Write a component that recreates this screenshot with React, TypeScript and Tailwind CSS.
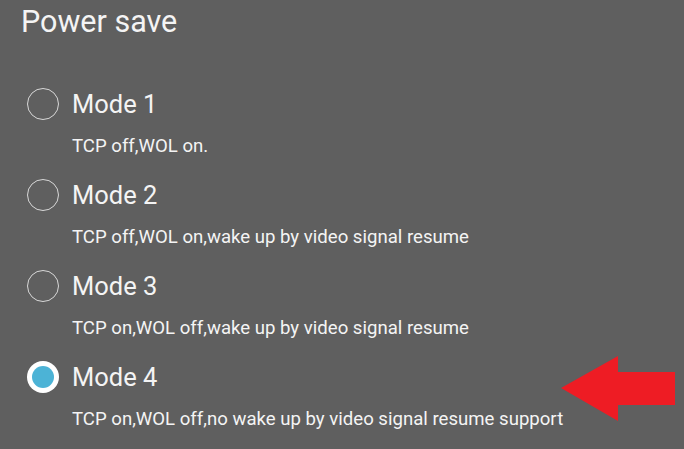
import React from "react";

const modes = [
  { label: "Mode 1", desc: "TCP off,WOL on.", checked: false },
  { label: "Mode 2", desc: "TCP off,WOL on,wake up by video signal resume", checked: false },
  { label: "Mode 3", desc: "TCP on,WOL off,wake up by video signal resume", checked: false },
  { label: "Mode 4", desc: "TCP on,WOL off,no wake up by video signal resume support", checked: true },
];

function Radio({ checked }: { checked: boolean }) {
  if (checked) {
    return (
      <div className="flex h-[32px] w-[32px] items-center justify-center rounded-full bg-white">
        <div className="h-[22px] w-[22px] rounded-full bg-[#4cb3d6]" />
      </div>
    );
  }
  return <div className="h-[32px] w-[32px] rounded-full border-[1.5px] border-[#d8d8d8]" />;
}

export default function App() {
  return (
    <div
      className="relative h-[449px] w-[684px] overflow-hidden bg-[#5f5f5f] text-white"
      style={{ fontFamily: "Roboto, 'Noto Sans', sans-serif" }}
    >
      <div className="pl-[21px] pt-[2px] text-[30.5px] leading-[40px] text-[#f4f4f4]">Power save</div>
      <div className="mt-[45px] flex flex-col">
        {modes.map((m) => (
          <div key={m.label} className="flex flex-col pl-[27px]">
            <div className="flex h-[34px] items-center gap-[13px]">
              <Radio checked={m.checked} />
              <span className="text-[25.5px] text-[#f4f4f4]">{m.label}</span>
            </div>
            <div className="mt-[13px] h-[44px] pl-[45px] text-[18.6px] leading-[24px] text-[#f4f4f4]">{m.desc}</div>
          </div>
        ))}
      </div>
      <svg className="absolute left-[560px] top-[354px]" width="118" height="70" viewBox="0 0 118 70">
        <polygon points="1,34 58,2 58,18 115,18 115,51 58,51 58,67" fill="#ee1c24" />
      </svg>
    </div>
  );
}
